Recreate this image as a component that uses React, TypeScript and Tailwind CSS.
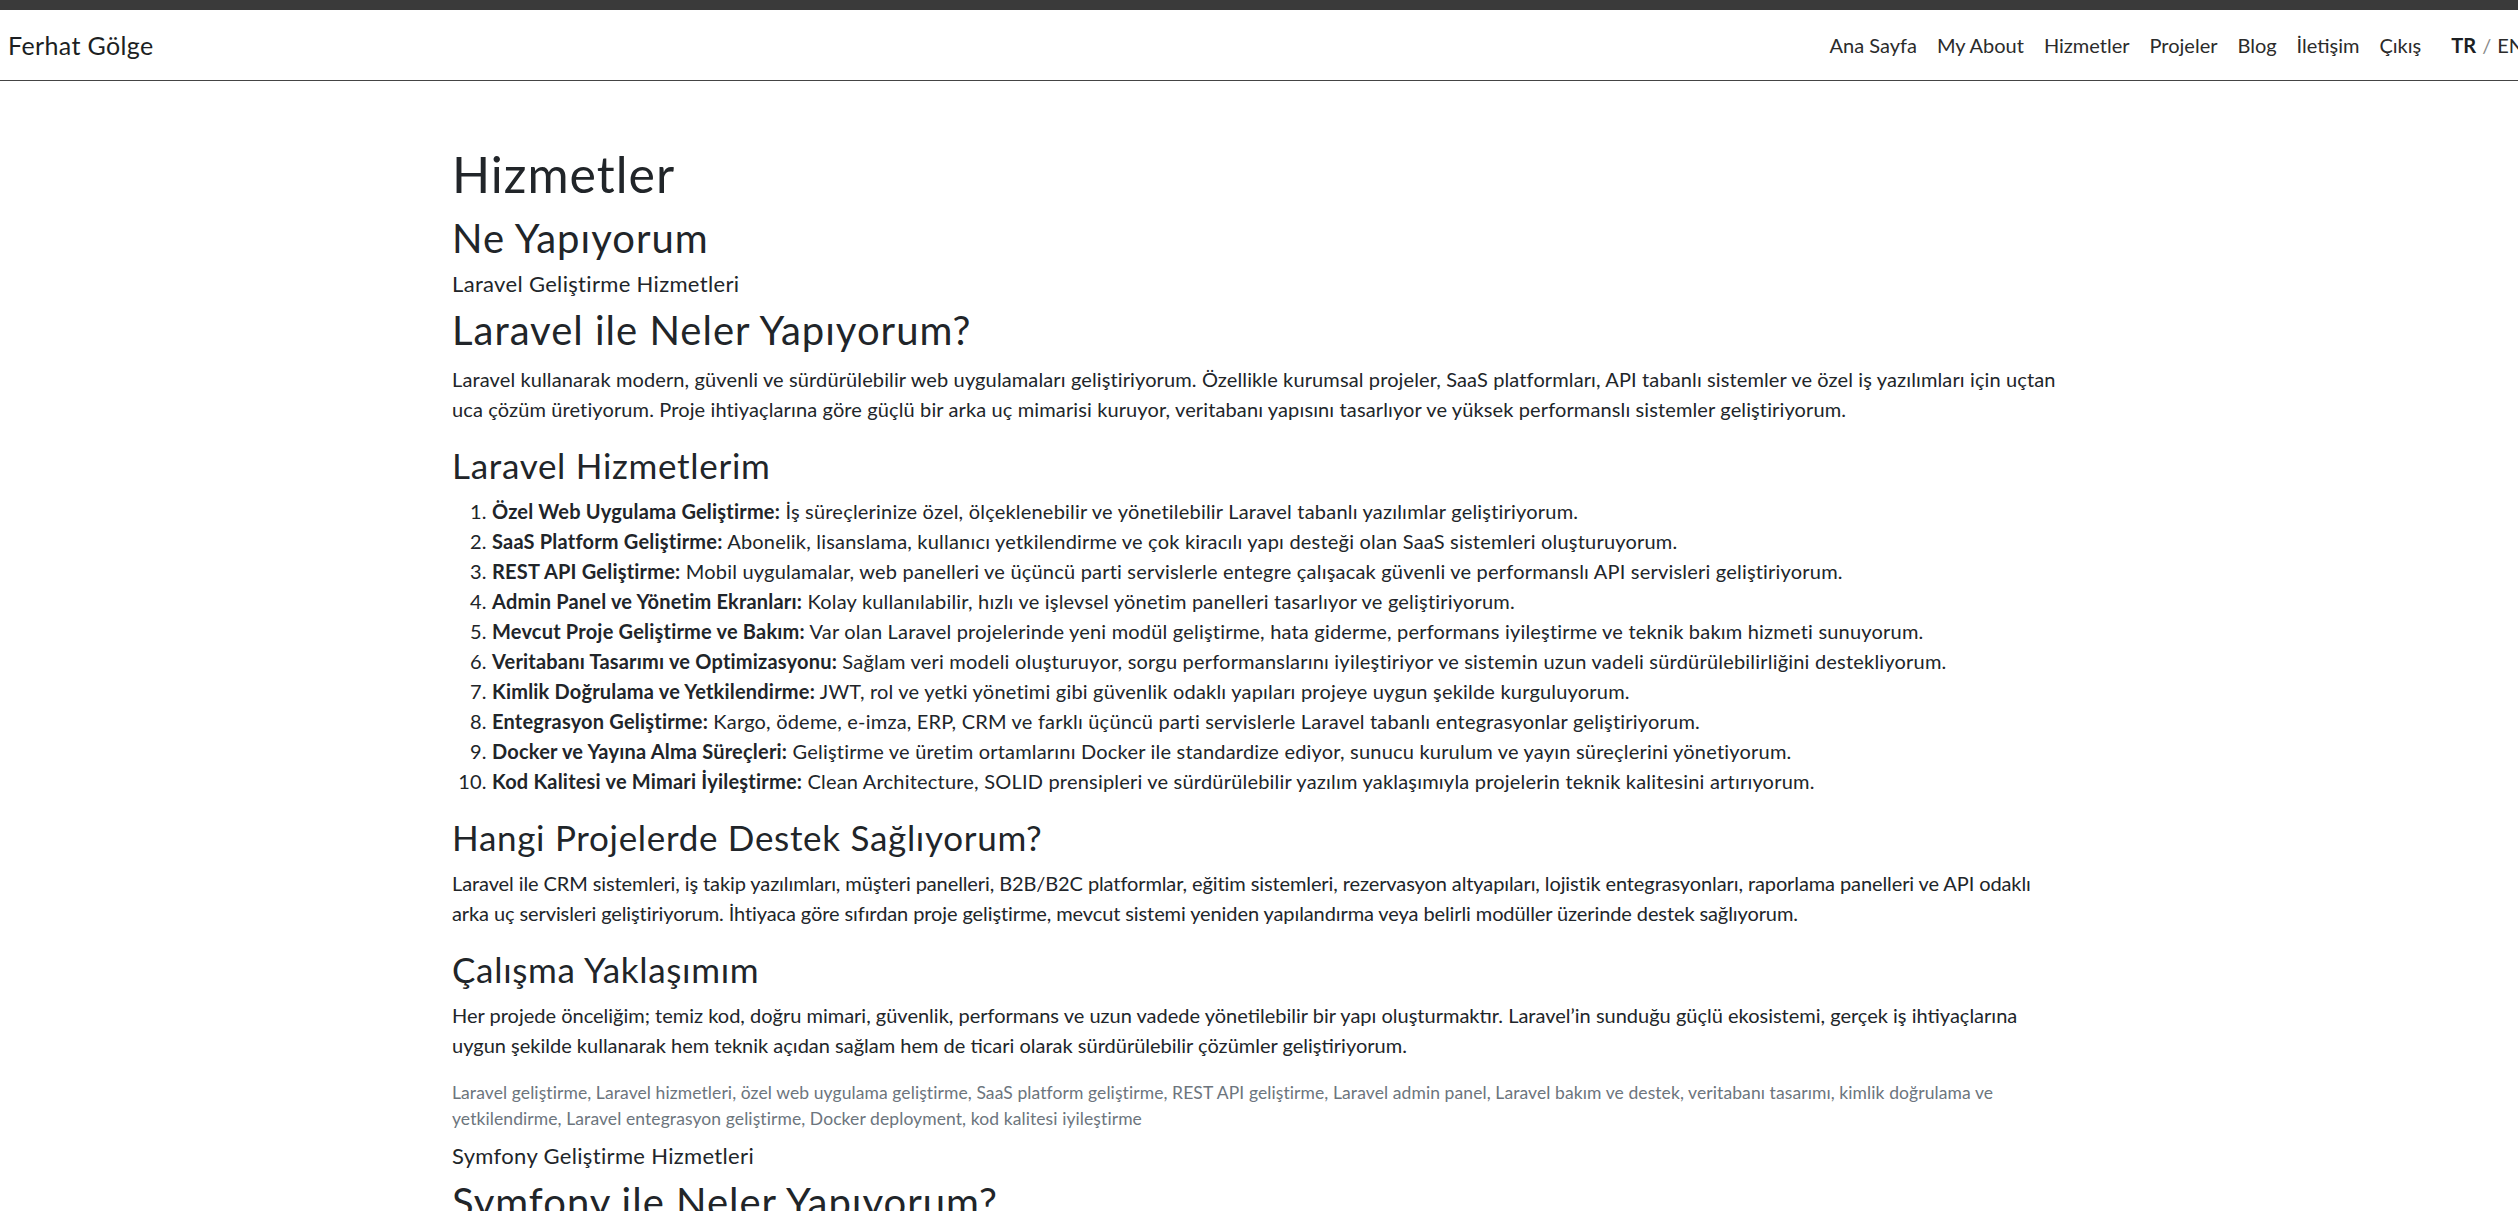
import React from "react";

const navLinks = ["Ana Sayfa", "My About", "Hizmetler", "Projeler", "Blog", "İletişim", "Çıkış"];

const services: [string, string][] = [
  ["Özel Web Uygulama Geliştirme:", "İş süreçlerinize özel, ölçeklenebilir ve yönetilebilir Laravel tabanlı yazılımlar geliştiriyorum."],
  ["SaaS Platform Geliştirme:", "Abonelik, lisanslama, kullanıcı yetkilendirme ve çok kiracılı yapı desteği olan SaaS sistemleri oluşturuyorum."],
  ["REST API Geliştirme:", "Mobil uygulamalar, web panelleri ve üçüncü parti servislerle entegre çalışacak güvenli ve performanslı API servisleri geliştiriyorum."],
  ["Admin Panel ve Yönetim Ekranları:", "Kolay kullanılabilir, hızlı ve işlevsel yönetim panelleri tasarlıyor ve geliştiriyorum."],
  ["Mevcut Proje Geliştirme ve Bakım:", "Var olan Laravel projelerinde yeni modül geliştirme, hata giderme, performans iyileştirme ve teknik bakım hizmeti sunuyorum."],
  ["Veritabanı Tasarımı ve Optimizasyonu:", "Sağlam veri modeli oluşturuyor, sorgu performanslarını iyileştiriyor ve sistemin uzun vadeli sürdürülebilirliğini destekliyorum."],
  ["Kimlik Doğrulama ve Yetkilendirme:", "JWT, rol ve yetki yönetimi gibi güvenlik odaklı yapıları projeye uygun şekilde kurguluyorum."],
  ["Entegrasyon Geliştirme:", "Kargo, ödeme, e-imza, ERP, CRM ve farklı üçüncü parti servislerle Laravel tabanlı entegrasyonlar geliştiriyorum."],
  ["Docker ve Yayına Alma Süreçleri:", "Geliştirme ve üretim ortamlarını Docker ile standardize ediyor, sunucu kurulum ve yayın süreçlerini yönetiyorum."],
  ["Kod Kalitesi ve Mimari İyileştirme:", "Clean Architecture, SOLID prensipleri ve sürdürülebilir yazılım yaklaşımıyla projelerin teknik kalitesini artırıyorum."],
];

export default function App() {
  return (
    <div className="min-h-screen bg-white text-[#212529] font-['Lato','Noto_Sans',sans-serif] overflow-hidden">
      {/* window strip */}
      <div className="h-[10px] bg-[#3a3a3a]" />

      {/* navbar */}
      <header className="h-[71px] border-b border-[#444] overflow-hidden">
        <div className="flex h-full items-center pl-[8px] -mr-[6px]">
          <a className="text-[25px] leading-[37px] tracking-[0.015em] text-[#1c1f23]">Ferhat Gölge</a>
          <nav className="ml-auto flex items-center">
            <ul className="flex items-center">
              {navLinks.map((l) => (
                <li key={l}>
                  <a className="block px-[10px] py-[8px] text-[20px] leading-[30px] text-[#2b2b2b]">{l}</a>
                </li>
              ))}
            </ul>
            <div className="flex items-center ml-[20px] text-[20px] leading-[30px] whitespace-nowrap">
              <span className="font-bold text-[#1c1f23]">TR</span>
              <span className="mx-[6px] text-[#888]">/</span>
              <span className="text-[#2b2b2b]">EN</span>
            </div>
          </nav>
        </div>
      </header>

      {/* content */}
      <main className="mx-auto w-[1644px] pl-[15px] pr-[9px] pt-[63px] text-[20px] leading-[30px]">
        <h1 className="text-[50px] leading-[60px] tracking-[0.02em] mb-[10px]">Hizmetler</h1>
        <h2 className="text-[40px] leading-[48px] tracking-[0.025em] mb-[10px]">Ne Yapıyorum</h2>

        <section>
          <h6 className="text-[22px] leading-[24px] tracking-[0.015em] mb-[10px]">Laravel Geliştirme Hizmetleri</h6>
          <h2 className="text-[40px] leading-[48px] tracking-[0.025em] mb-[10px]">Laravel ile Neler Yapıyorum?</h2>
          <p className="mb-[20px] tracking-[0.006em]">
            Laravel kullanarak modern, güvenli ve sürdürülebilir web uygulamaları geliştiriyorum. Özellikle kurumsal projeler, SaaS platformları, API tabanlı sistemler ve özel iş yazılımları için uçtan uca çözüm üretiyorum. Proje ihtiyaçlarına göre güçlü bir arka uç mimarisi kuruyor, veritabanı yapısını tasarlıyor ve yüksek performanslı sistemler geliştiriyorum.
          </p>

          <h3 className="text-[35px] leading-[42px] tracking-[0.02em] mb-[10px]">Laravel Hizmetlerim</h3>
          <ol className="list-decimal pl-[40px] mb-[20px] tracking-[0.01em]">
            {services.map(([t, d]) => (
              <li key={t}>
                <strong className="font-bold">{t}</strong> {d}
              </li>
            ))}
          </ol>

          <h3 className="text-[35px] leading-[42px] tracking-[0.02em] mb-[10px]">Hangi Projelerde Destek Sağlıyorum?</h3>
          <p className="mb-[20px] tracking-[-0.005em]">
            Laravel ile CRM sistemleri, iş takip yazılımları, müşteri panelleri, B2B/B2C platformlar, eğitim sistemleri, rezervasyon altyapıları, lojistik entegrasyonları, raporlama panelleri ve API odaklı arka uç servisleri geliştiriyorum. İhtiyaca göre sıfırdan proje geliştirme, mevcut sistemi yeniden yapılandırma veya belirli modüller üzerinde destek sağlıyorum.
          </p>

          <h3 className="text-[35px] leading-[42px] tracking-[0.02em] mb-[10px]">Çalışma Yaklaşımım</h3>
          <p className="mb-[20px]">
            Her projede önceliğim; temiz kod, doğru mimari, güvenlik, performans ve uzun vadede yönetilebilir bir yapı oluşturmaktır. Laravel’in sunduğu güçlü ekosistemi, gerçek iş ihtiyaçlarına uygun şekilde kullanarak hem teknik açıdan sağlam hem de ticari olarak sürdürülebilir çözümler geliştiriyorum.
          </p>

          <p className="mb-[11px] text-[17.5px] leading-[26.25px] tracking-[0.005em] text-[#6c757d]">
            Laravel geliştirme, Laravel hizmetleri, özel web uygulama geliştirme, SaaS platform geliştirme, REST API geliştirme, Laravel admin panel, Laravel bakım ve destek, veritabanı tasarımı, kimlik doğrulama ve yetkilendirme, Laravel entegrasyon geliştirme, Docker deployment, kod kalitesi iyileştirme
          </p>
        </section>

        <section>
          <h6 className="text-[22px] leading-[24px] tracking-[0.015em] mb-[10px]">Symfony Geliştirme Hizmetleri</h6>
          <h2 className="text-[40px] leading-[48px] tracking-[0.025em] mb-[10px]">Symfony ile Neler Yapıyorum?</h2>
        </section>
      </main>
    </div>
  );
}
